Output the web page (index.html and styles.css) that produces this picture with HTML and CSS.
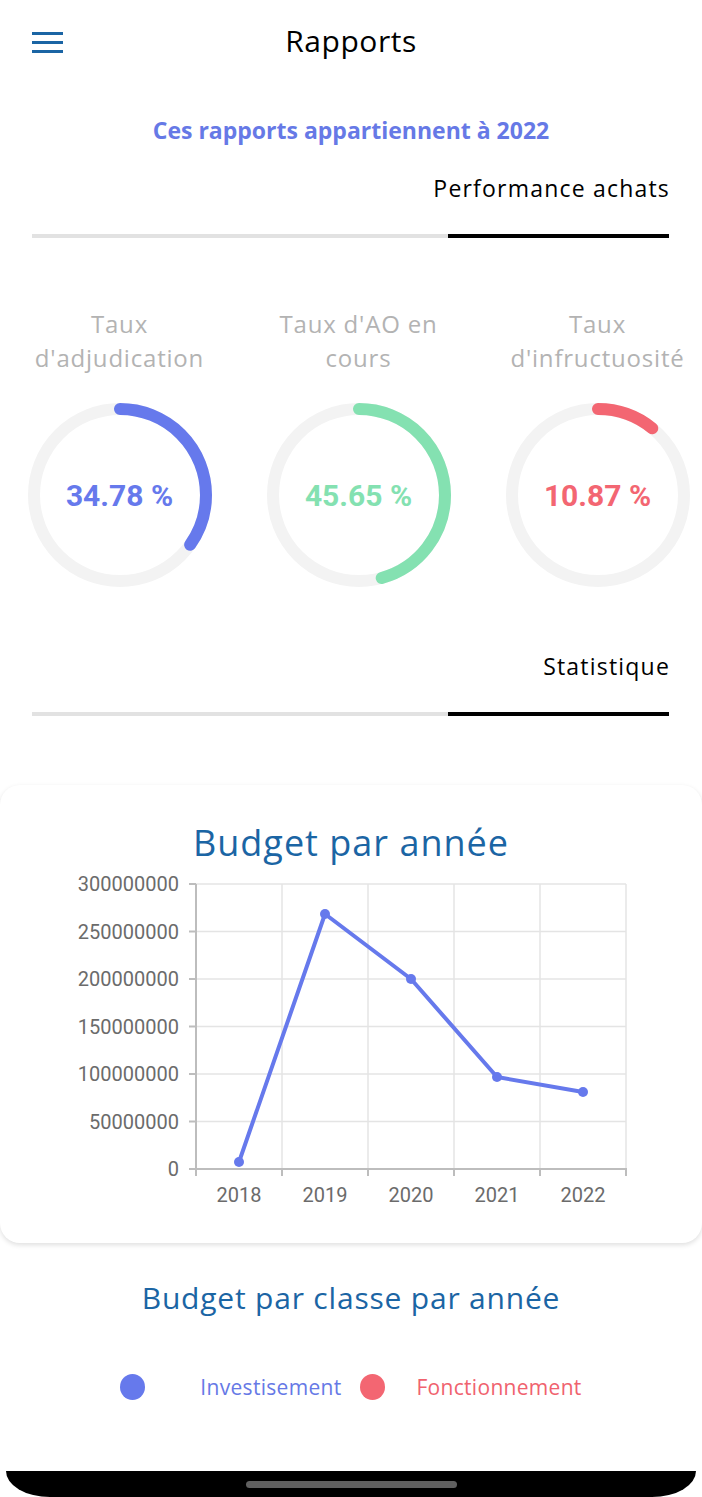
FILE: index.html
```html
<!DOCTYPE html>
<html lang="fr">
<head>
<meta charset="utf-8">
<title>Rapports</title>
<link rel="stylesheet" href="styles.css">
</head>
<body>
<div class="screen">
  <header class="topbar">
    <div class="menu"><span></span><span></span><span></span></div>
    <h1 class="title">Rapports</h1>
    <div></div>
  </header>

  <p class="subtitle">Ces rapports appartiennent à 2022</p>

  <div class="tab-label tab-first">Performance achats</div>
  <div class="tab-line"><span class="tab-rest"></span><span class="tab-active"></span></div>

  <section class="gauges">
    <div class="gauge">
      <div class="gauge-label">Taux<br>d'adjudication</div>
      <div class="gauge-ring">
        <svg width="184" height="184" viewBox="0 0 184 184">
          <circle cx="92" cy="92" r="86" fill="none" stroke="#f3f3f3" stroke-width="12"/>
          <circle cx="92" cy="92" r="86" fill="none" stroke="#6679ec" stroke-width="12" stroke-linecap="round" stroke-dasharray="187.9 600" transform="rotate(-90 92 92)"/>
        </svg>
        <div class="gauge-value blue">34.78 %</div>
      </div>
    </div>
    <div class="gauge">
      <div class="gauge-label">Taux d'AO en<br>cours</div>
      <div class="gauge-ring">
        <svg width="184" height="184" viewBox="0 0 184 184">
          <circle cx="92" cy="92" r="86" fill="none" stroke="#f3f3f3" stroke-width="12"/>
          <circle cx="92" cy="92" r="86" fill="none" stroke="#84e1b1" stroke-width="12" stroke-linecap="round" stroke-dasharray="246.7 600" transform="rotate(-90 92 92)"/>
        </svg>
        <div class="gauge-value green">45.65 %</div>
      </div>
    </div>
    <div class="gauge">
      <div class="gauge-label">Taux<br>d'infructuosité</div>
      <div class="gauge-ring">
        <svg width="184" height="184" viewBox="0 0 184 184">
          <circle cx="92" cy="92" r="86" fill="none" stroke="#f3f3f3" stroke-width="12"/>
          <circle cx="92" cy="92" r="86" fill="none" stroke="#f36672" stroke-width="12" stroke-linecap="round" stroke-dasharray="58.7 600" transform="rotate(-90 92 92)"/>
        </svg>
        <div class="gauge-value red">10.87 %</div>
      </div>
    </div>
  </section>

  <div class="tab-label tab-second">Statistique</div>
  <div class="tab-line"><span class="tab-rest"></span><span class="tab-active"></span></div>

  <section class="card">
    <h2 class="card-title">Budget par année</h2>
    <svg class="chart" width="702" height="360" viewBox="0 0 702 360">
      <g stroke="#e4e4e4" stroke-width="1.5">
        <line x1="196" y1="14" x2="626" y2="14"/>
        <line x1="196" y1="61.5" x2="626" y2="61.5"/>
        <line x1="196" y1="109" x2="626" y2="109"/>
        <line x1="196" y1="156.5" x2="626" y2="156.5"/>
        <line x1="196" y1="204" x2="626" y2="204"/>
        <line x1="196" y1="251.5" x2="626" y2="251.5"/>
        <line x1="282" y1="14" x2="282" y2="299"/>
        <line x1="368" y1="14" x2="368" y2="299"/>
        <line x1="454" y1="14" x2="454" y2="299"/>
        <line x1="540" y1="14" x2="540" y2="299"/>
        <line x1="626" y1="14" x2="626" y2="299"/>
      </g>
      <g stroke="#bdbdbd" stroke-width="2">
        <line x1="196" y1="14" x2="196" y2="300"/>
        <line x1="195" y1="299" x2="627" y2="299"/>
        <line x1="189" y1="14" x2="196" y2="14"/>
        <line x1="189" y1="61.5" x2="196" y2="61.5"/>
        <line x1="189" y1="109" x2="196" y2="109"/>
        <line x1="189" y1="156.5" x2="196" y2="156.5"/>
        <line x1="189" y1="204" x2="196" y2="204"/>
        <line x1="189" y1="251.5" x2="196" y2="251.5"/>
        <line x1="189" y1="299" x2="196" y2="299"/>
        <line x1="196" y1="299" x2="196" y2="306"/>
        <line x1="282" y1="299" x2="282" y2="306"/>
        <line x1="368" y1="299" x2="368" y2="306"/>
        <line x1="454" y1="299" x2="454" y2="306"/>
        <line x1="540" y1="299" x2="540" y2="306"/>
        <line x1="626" y1="299" x2="626" y2="306"/>
      </g>
      <g class="axis-text" text-anchor="end">
        <text x="179" y="21">300000000</text>
        <text x="179" y="68.5">250000000</text>
        <text x="179" y="116">200000000</text>
        <text x="179" y="163.5">150000000</text>
        <text x="179" y="211">100000000</text>
        <text x="179" y="258.5">50000000</text>
        <text x="179" y="306">0</text>
      </g>
      <g class="axis-text" text-anchor="middle">
        <text x="239" y="332">2018</text>
        <text x="325" y="332">2019</text>
        <text x="411" y="332">2020</text>
        <text x="497" y="332">2021</text>
        <text x="583" y="332">2022</text>
      </g>
      <polyline points="239,292 325,44 411,109 497,207 583,222" fill="none" stroke="#6679ec" stroke-width="4" stroke-linejoin="round"/>
      <g fill="#6679ec">
        <circle cx="239" cy="292" r="5"/>
        <circle cx="325" cy="44" r="5"/>
        <circle cx="411" cy="109" r="5"/>
        <circle cx="497" cy="207" r="5"/>
        <circle cx="583" cy="222" r="5"/>
      </g>
    </svg>
  </section>

  <h2 class="section-title">Budget par classe par année</h2>

  <div class="legend">
    <span class="dot dot-blue"></span>
    <span class="legend-text text-blue">Investisement</span>
    <span class="dot dot-red"></span>
    <span class="legend-text text-red">Fonctionnement</span>
  </div>

  <div class="navbar"><span class="handle"></span></div>
</div>
</body>
</html>
```

FILE: styles.css
```css
html, body {
  margin: 0;
  padding: 0;
  background: #ffffff;
}

body {
  width: 702px;
  overflow-x: hidden;
  font-family: "Open Sans", "Noto Sans", sans-serif;
  color: #000;
}

.screen {
  display: flex;
  flex-direction: column;
  height: 1497px;
}

.topbar {
  display: grid;
  grid-template-columns: 1fr auto 1fr;
  align-items: center;
  height: 84px;
}

.menu {
  display: flex;
  flex-direction: column;
  gap: 6px;
  width: 31px;
  margin-left: 32px;
}

.menu span {
  display: block;
  height: 3px;
  background: #1b65a4;
}

.title {
  margin: 0 0 2px;
  font-size: 30px;
  font-weight: 500;
  line-height: 36px;
  letter-spacing: 0.55px;
}

.subtitle {
  margin: 31px 0 0;
  text-align: center;
  font-size: 23px;
  font-weight: 700;
  line-height: 30px;
  color: #6679e6;
}

.tab-label {
  text-align: right;
  padding-right: 32px;
  font-size: 23px;
  font-weight: 500;
  line-height: 30px;
  letter-spacing: 1.2px;
}

.tab-first {
  margin-top: 28px;
}

.tab-second {
  margin-top: 64px;
}

.tab-line {
  display: flex;
  margin: 31px 33px 0 32px;
  height: 4px;
}

.tab-rest {
  flex: 416;
  background: #e2e2e2;
}

.tab-active {
  flex: 221;
  background: #000;
}

.gauges {
  display: grid;
  grid-template-columns: repeat(3, 239px);
  margin-top: 69px;
}

.gauge {
  display: flex;
  flex-direction: column;
  align-items: center;
}

.gauge-label {
  font-size: 24px;
  line-height: 34px;
  letter-spacing: 0.8px;
  color: #b3b3b3;
  text-align: center;
  white-space: nowrap;
}

.gauge-ring {
  position: relative;
  width: 184px;
  height: 184px;
  margin-top: 28px;
}

.gauge-ring svg {
  display: block;
}

.gauge-value {
  position: absolute;
  inset: 0;
  display: flex;
  align-items: center;
  justify-content: center;
  font-family: Roboto, "Liberation Sans", sans-serif;
  font-weight: 700;
  font-size: 30px;
}

.blue { color: #6679ec; }
.green { color: #84e1b1; }
.red { color: #f36672; }

.card {
  margin-top: 69px;
  background: #fff;
  border-radius: 20px;
  box-shadow: 0 2px 5px rgba(0, 0, 0, 0.13);
  padding: 36px 0 13px;
}

.card-title {
  margin: 0;
  text-align: center;
  font-size: 36px;
  font-weight: 500;
  line-height: 44px;
  letter-spacing: 1px;
  color: #1b65a4;
}

.chart {
  display: block;
  margin-top: 5px;
}

.axis-text {
  font-family: Roboto, "Liberation Sans", sans-serif;
  font-size: 20px;
  fill: #6b6b6b;
}

.section-title {
  margin: 35px 0 0;
  text-align: center;
  font-size: 30px;
  font-weight: 500;
  line-height: 40px;
  letter-spacing: 0.8px;
  color: #1b65a4;
}

.legend {
  display: flex;
  align-items: center;
  justify-content: center;
  height: 30px;
  margin-top: 54px;
}

.dot {
  width: 25px;
  height: 26px;
  border-radius: 50%;
}

.dot-blue {
  background: #6679ec;
  margin-right: 55px;
}

.dot-red {
  background: #f36672;
  margin-right: 31px;
}

.legend-text {
  font-size: 21px;
  line-height: 30px;
  letter-spacing: 0.3px;
}

.text-blue {
  color: #6679e6;
  margin-right: 19px;
}

.text-red {
  color: #f0626e;
}

.navbar {
  margin: auto 6px 0;
  height: 26px;
  background: #000;
  border-radius: 0 0 44px 44px / 0 0 26px 26px;
  display: flex;
  justify-content: center;
}

.handle {
  width: 211px;
  height: 7px;
  margin-top: 10px;
  border-radius: 4px;
  background: #606060;
}
```
